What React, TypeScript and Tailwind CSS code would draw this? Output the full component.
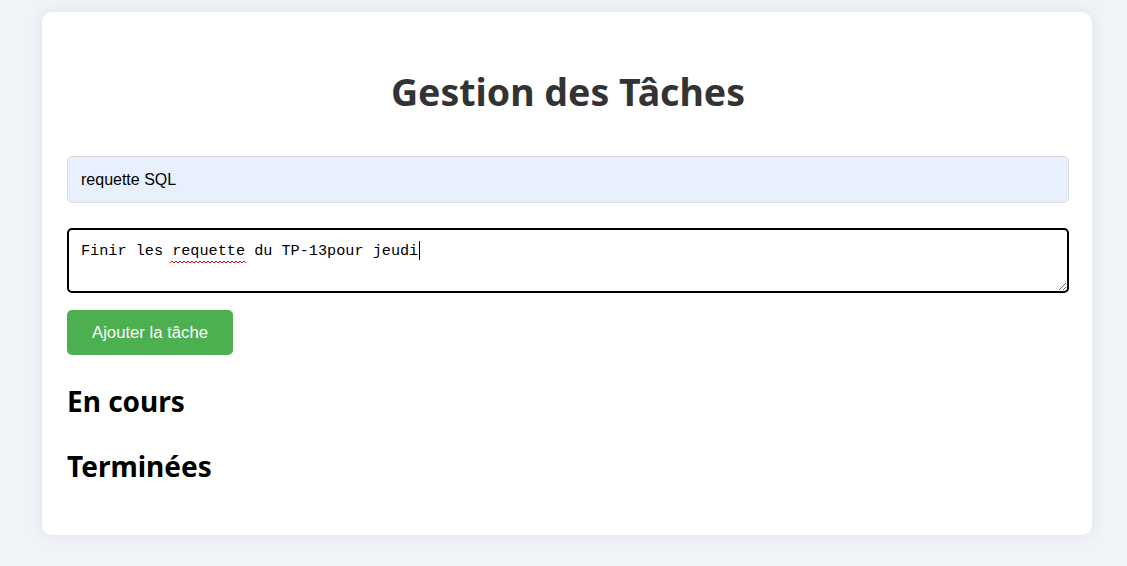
import React from "react";

export default function App() {
  return (
    <div className="min-h-[566px] w-full bg-[#f0f3f7] pt-[12px] pb-[31px]">
      <div className="ml-[42px] w-[1050px] rounded-[10px] bg-white pl-[25px] pt-[25px] pb-[51px] shadow-[0_0_15px_rgba(0,0,0,0.08)]">
        <h1 className="mt-[33px] mb-[42px] w-[1002px] text-center text-[37.5px] font-bold leading-[44px] text-[#333] [font-family:'Noto_Sans',sans-serif]">
          Gestion des Tâches
        </h1>
        <input
          type="text"
          defaultValue="requette SQL"
          className="block h-[47px] w-[1002px] rounded-[5px] border border-[#dadce0] bg-[#e8f0fe] px-[13px] text-[16px] text-black outline-none [font-family:'Liberation_Sans',Arial,sans-serif]"
        />
        <div className="relative mt-[25px] w-[1002px]">
          <textarea
            defaultValue="Finir les requette du TP-13pour jeudi"
            spellCheck={false}
            className="block h-[65px] w-full resize-y rounded-[5px] border-2 border-black bg-white px-[12px] pt-[11px] text-[15.2px] leading-[20px] text-black outline-none [font-family:'Liberation_Mono',monospace]"
          />
          <svg
            className="pointer-events-none absolute left-[103px] top-[32px]"
            width="76"
            height="4"
            viewBox="0 0 76 4"
          >
            <path
              d="M0 3 L2 1 L4 3 L6 1 L8 3 L10 1 L12 3 L14 1 L16 3 L18 1 L20 3 L22 1 L24 3 L26 1 L28 3 L30 1 L32 3 L34 1 L36 3 L38 1 L40 3 L42 1 L44 3 L46 1 L48 3 L50 1 L52 3 L54 1 L56 3 L58 1 L60 3 L62 1 L64 3 L66 1 L68 3 L70 1 L72 3 L74 1 L76 3"
              fill="none"
              stroke="#e00"
              strokeWidth="1"
            />
          </svg>
          <div className="pointer-events-none absolute left-[352px] top-[13px] h-[19px] w-px bg-black" />
        </div>
        <button className="mt-[17px] block h-[45px] w-[166px] rounded-[5px] bg-[#4caf50] text-[16.7px] text-white [font-family:'Liberation_Sans',Arial,sans-serif]">
          Ajouter la tâche
        </button>
        <h2 className="mt-[28px] text-[28px] font-bold leading-[36px] text-black [font-family:'Noto_Sans',sans-serif]">
          En cours
        </h2>
        <h2 className="mt-[29px] text-[28px] font-bold leading-[36px] text-black [font-family:'Noto_Sans',sans-serif]">
          Terminées
        </h2>
      </div>
    </div>
  );
}
